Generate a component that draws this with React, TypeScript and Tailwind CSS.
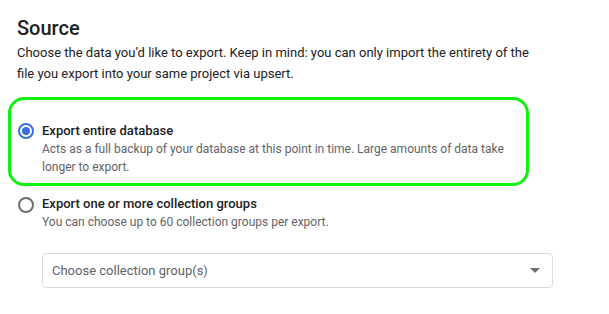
import React from "react";

export default function App() {
  return (
    <div className="w-[609px] h-[314px] bg-white font-['Roboto',sans-serif] text-[#202124] pt-[14px]">
      <div className="pl-[17px]">
        <h2 className="text-[20px] leading-[28px] font-medium text-[#202124]">Source</h2>
        <p className="text-[13px] leading-[21px] text-[#202124] w-[525px]">
          Choose the data you’d like to export. Keep in mind: you can only import the entirety of the file you export into your same project via upsert.
        </p>
      </div>
      <div className="ml-[8px] mt-[13px] w-[521px] h-[89px] border-[3px] border-[#0ef00e] rounded-[16px] flex items-start pl-[7px] pt-[22px]">
        <div className="w-[16px] h-[16px] rounded-full border-2 border-[#3a6fd8] flex items-center justify-center mt-[1px] shrink-0">
          <div className="w-[8px] h-[8px] rounded-full bg-[#3a6fd8]" />
        </div>
        <div className="ml-[8px]">
          <div className="text-[13px] leading-[18px] font-medium text-[#202124]">Export entire database</div>
          <div className="text-[12px] leading-[18px] text-[#5f6368] w-[470px]">
            Acts as a full backup of your database at this point in time. Large amounts of data take longer to export.
          </div>
        </div>
      </div>
      <div className="flex items-start pl-[18px] mt-[9px]">
        <div className="w-[16px] h-[16px] rounded-full border-2 border-[#6b6f73] mt-[2px] shrink-0" />
        <div className="ml-[8px]">
          <div className="text-[13px] leading-[18px] font-medium text-[#202124]">Export one or more collection groups</div>
          <div className="text-[12px] leading-[18px] text-[#5f6368]">You can choose up to 60 collection groups per export.</div>
        </div>
      </div>
      <div className="ml-[42px] mt-[22px] w-[511px] h-[35px] border border-[#dadce0] rounded-[4px] flex items-center justify-between pl-[9px] pr-[12px]">
        <span className="text-[13px] text-[#5f6368]">Choose collection group(s)</span>
        <svg width="10" height="5" viewBox="0 0 10 5"><path d="M0 0 L10 0 L5 5 Z" fill="#6b6f73" /></svg>
      </div>
    </div>
  );
}
